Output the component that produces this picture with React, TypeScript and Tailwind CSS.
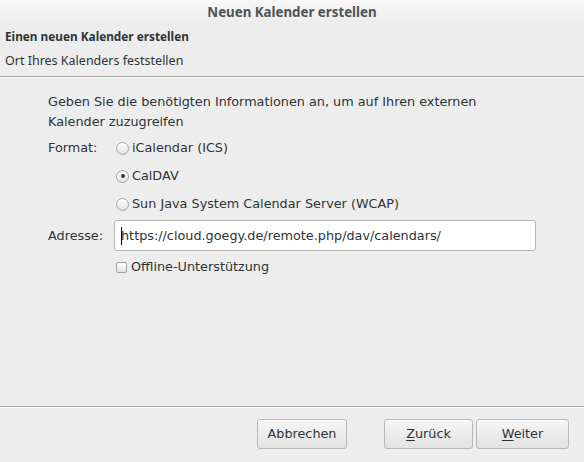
import React from "react";

function Radio({ checked, label }: { checked?: boolean; label: string }) {
  return (
    <div className="h-[28px] flex items-center">
      <span className="ml-[2px] w-[13px] h-[13px] rounded-full border border-[#a2a2a2] bg-gradient-to-b from-[#ffffff] to-[#e2e2e2] flex items-center justify-center">
        {checked && <span className="w-[4px] h-[4px] rounded-full bg-[#2e3436]" />}
      </span>
      <span className="ml-[3px]">{label}</span>
    </div>
  );
}

function Btn({ w, children }: { w: string; children: React.ReactNode }) {
  return (
    <div
      className={`${w} h-[30px] rounded-[3px] border border-[#b8b8b8] bg-gradient-to-b from-[#f6f6f6] to-[#e2e2e2] flex items-center justify-center shadow-[inset_0_1px_0_#ffffff]`}
    >
      {children}
    </div>
  );
}

export default function App() {
  return (
    <div
      className="w-[584px] h-[462px] bg-[#ededed] flex flex-col text-[#2e3436] overflow-hidden"
      style={{ fontFamily: '"DejaVu Sans", sans-serif' }}
    >
      <div className="h-[25px] shrink-0 bg-gradient-to-b from-[#f8f8f8] to-[#ebebeb] flex items-center justify-center font-bold text-[13.3px] text-[#4a5456]" style={{ fontFamily: '"Noto Sans", sans-serif' }}>
        Neuen Kalender erstellen
      </div>
      <div className="px-[5px] flex flex-col text-[12.5px]" style={{ fontFamily: '"Noto Sans", sans-serif' }}>
        <div className="h-[24px] flex items-center font-bold text-[11.8px]">Einen neuen Kalender erstellen</div>
        <div className="h-[24px] flex items-center">Ort Ihres Kalenders feststellen</div>
      </div>
      <div className="mt-[3px] h-px bg-[#a4a4a4]" />
      <div className="h-px bg-[#ffffff]" />
      <div className="flex-1 pl-[48px] pt-[14px] text-[12.8px] flex flex-col">
        <div className="leading-[20px]">
          Geben Sie die benötigten Informationen an, um auf Ihren externen
          <br />
          Kalender zuzugreifen
        </div>
        <div className="mt-[2px] flex">
          <div className="w-[66px] h-[28px] flex items-center">Format:</div>
          <div className="flex flex-col">
            <Radio label="iCalendar (ICS)" />
            <Radio checked label="CalDAV" />
            <Radio label="Sun Java System Calendar Server (WCAP)" />
          </div>
        </div>
        <div className="mt-[2px] flex items-center">
          <div className="w-[66px]">Adresse:</div>
          <div className="w-[422px] h-[31px] rounded-[3px] border border-[#b6b6b3] bg-white flex items-center pl-[6px] relative">
            <span className="absolute left-[6px] top-[6px] w-px h-[18px] bg-[#000000]" />
            <span>https://cloud.goegy.de/remote.php/dav/calendars/</span>
          </div>
        </div>
        <div className="mt-[2px] h-[28px] flex items-center pl-[68px]">
          <span className="w-[11px] h-[11px] rounded-[2px] border border-[#a2a2a2] bg-gradient-to-b from-[#ffffff] to-[#e2e2e2]" />
          <span className="ml-[4px]">Offline-Unterstützung</span>
        </div>
      </div>
      <div className="h-px bg-[#a4a4a4]" />
      <div className="h-px bg-[#ffffff]" />
      <div className="h-[54px] shrink-0 pt-[11px] pr-[15px] flex items-start justify-end text-[12.8px]">
        <Btn w="w-[90px]">Abbrechen</Btn>
        <div className="w-[37px]" />
        <Btn w="w-[89px]">
          <span><u className="underline-offset-2">Z</u>urück</span>
        </Btn>
        <div className="w-[3px]" />
        <Btn w="w-[93px]">
          <span><u className="underline-offset-2">W</u>eiter</span>
        </Btn>
      </div>
    </div>
  );
}
